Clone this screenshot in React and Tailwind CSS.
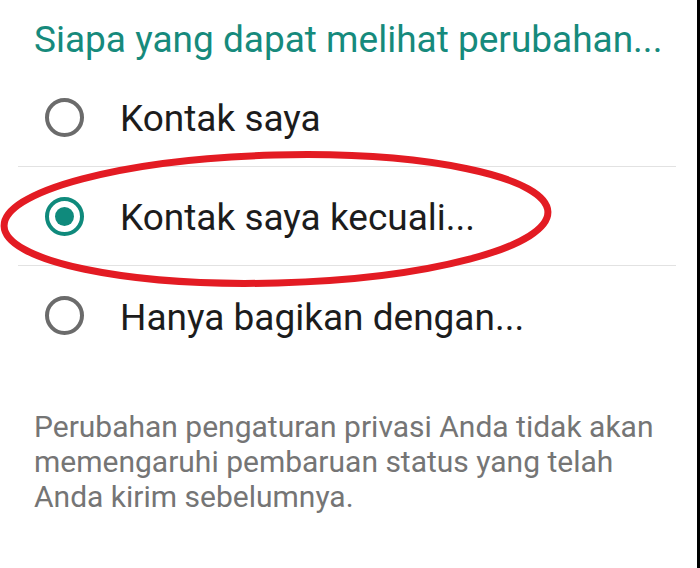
import React from 'react';

const Radio = ({ checked }) => (
  <div
    className={
      'w-[39px] h-[39px] rounded-full border-[4px] flex items-center justify-center shrink-0 ' +
      (checked ? 'border-[#0f8a7c]' : 'border-[#6b6b6b]')
    }
  >
    {checked && <div className="w-[19px] h-[19px] rounded-full bg-[#0f8a7c]" />}
  </div>
);

const Option = ({ label, checked, divider }) => (
  <div className={'flex items-center h-[99px] pl-[27px] ' + (divider ? 'border-b border-[#e2e2e2]' : '')}>
    <Radio checked={checked} />
    <span className="ml-[36px] pt-[3px] text-[37px] text-[#1c1c1c] leading-none">{label}</span>
  </div>
);

export default function App() {
  return (
    <div className="relative w-[700px] h-[568px] bg-white overflow-hidden font-['Roboto',sans-serif] border-r-[3px] border-black">
      <div className="pt-[18px] pl-[34px] text-[37px] leading-[44px] text-[#168a7c]">
        Siapa yang dapat melihat perubahan...
      </div>

      <div className="mt-[6px] mx-[18px] w-[658px]">
        <Option label="Kontak saya" divider />
        <Option label="Kontak saya kecuali..." checked divider />
        <Option label="Hanya bagikan dengan..." />
      </div>

      <p className="mt-[44px] pl-[34px] pr-[20px] text-[30px] leading-[35px] text-[#757575]">
        Perubahan pengaturan privasi Anda tidak akan memengaruhi pembaruan status yang telah Anda kirim sebelumnya.
      </p>

      {/* hand-drawn highlight */}
      <svg className="absolute left-0 top-0 pointer-events-none" width="700" height="568">
        <ellipse
          cx="276"
          cy="219"
          rx="272"
          ry="64"
          fill="none"
          stroke="#e31b23"
          strokeWidth="7"
          transform="rotate(-1.5 276 219)"
        />
      </svg>
    </div>
  );
}
